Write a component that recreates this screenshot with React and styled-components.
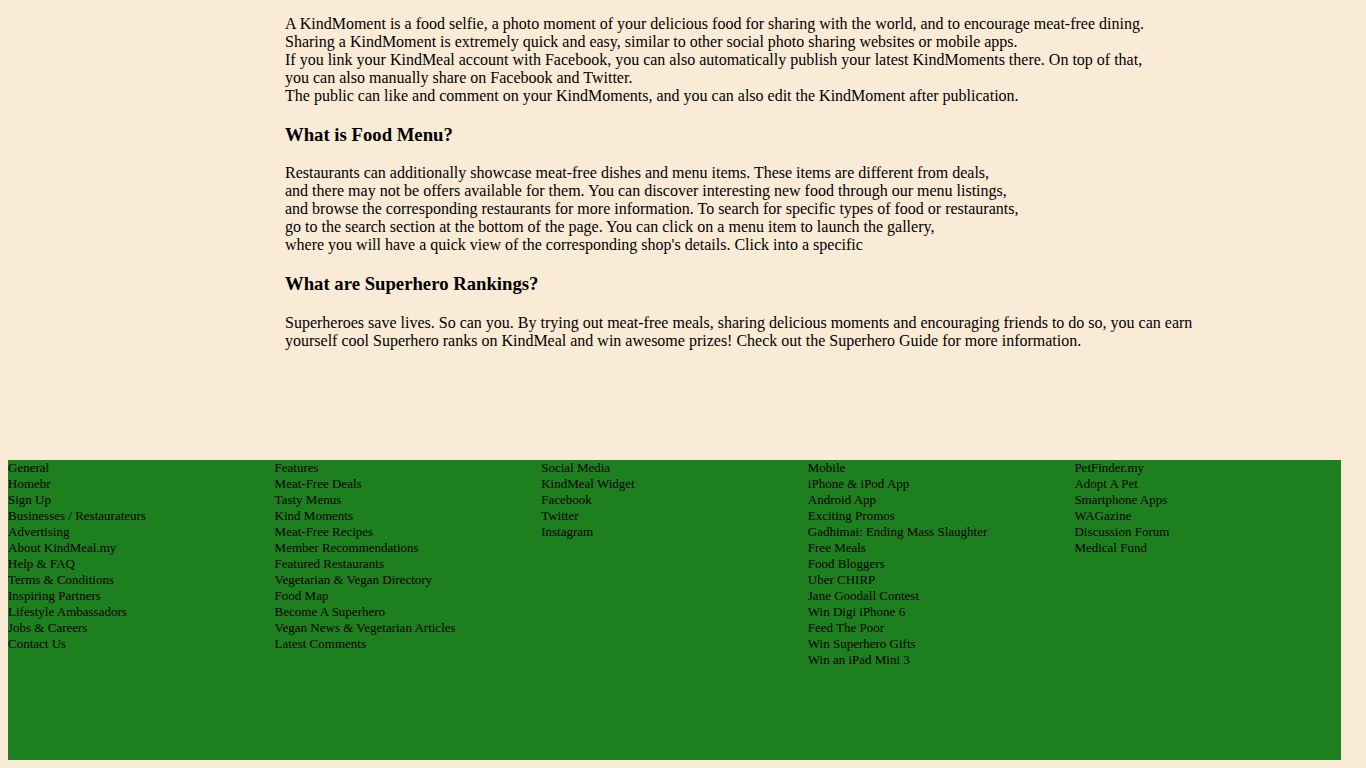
import React from 'react';
import styled, { createGlobalStyle } from 'styled-components';

const GlobalStyle = createGlobalStyle`
  body {
    margin: 8px 25px 8px 8px;
    background: #faebd7;
    font-family: 'Liberation Serif', 'Times New Roman', serif;
    color: #000;
  }
`;

const Main = styled.div`
  margin-left: 277px;
  padding-top: 7px;
  padding-bottom: 94px;
`;

const Para = styled.p`
  font-size: 16px;
  margin: ${p => (p.$first ? '0' : '16px')} 0 16px;
`;

const Heading = styled.h3`
  font-size: 18.72px;
  font-weight: bold;
  margin: 18.72px 0;
`;

const Footer = styled.footer`
  background: #1e7f1e;
  height: 300px;
  display: grid;
  grid-template-columns: repeat(5, 1fr);
  font-size: 13px;
  line-height: 16px;
`;

const Column = styled.ul`
  list-style: none;
  margin: 0;
  padding: 0;
`;

const Item = styled.li`
  margin: 0;
`;

const FooterLink = styled.a`
  color: #000;
  text-decoration: none;
`;

const columns = [
  ['General', 'Homebr', 'Sign Up', 'Businesses / Restaurateurs', 'Advertising', 'About KindMeal.my', 'Help & FAQ', 'Terms & Conditions', 'Inspiring Partners', 'Lifestyle Ambassadors', 'Jobs & Careers', 'Contact Us'],
  ['Features', 'Meat-Free Deals', 'Tasty Menus', 'Kind Moments', 'Meat-Free Recipes', 'Member Recommendations', 'Featured Restaurants', 'Vegetarian & Vegan Directory', 'Food Map', 'Become A Superhero', 'Vegan News & Vegetarian Articles', 'Latest Comments'],
  ['Social Media', 'KindMeal Widget', 'Facebook', 'Twitter', 'Instagram'],
  ['Mobile', 'iPhone & iPod App', 'Android App', 'Exciting Promos', 'Gadhimai: Ending Mass Slaughter', 'Free Meals', 'Food Bloggers', 'Uber CHIRP', 'Jane Goodall Contest', 'Win Digi iPhone 6', 'Feed The Poor', 'Win Superhero Gifts', 'Win an iPad Mini 3'],
  ['PetFinder.my', 'Adopt A Pet', 'Smartphone Apps', 'WAGazine', 'Discussion Forum', 'Medical Fund'],
];

const App = () => {
  return (
    <>
      <GlobalStyle />
      <Main>
        <Para $first>
          A KindMoment is a food selfie, a photo moment of your delicious food for sharing with the world, and to encourage meat-free dining.<br />
          Sharing a KindMoment is extremely quick and easy, similar to other social photo sharing websites or mobile apps.<br />
          If you link your KindMeal account with Facebook, you can also automatically publish your latest KindMoments there. On top of that,<br />
          you can also manually share on Facebook and Twitter.<br />
          The public can like and comment on your KindMoments, and you can also edit the KindMoment after publication.
        </Para>
        <Heading>What is Food Menu?</Heading>
        <Para>
          Restaurants can additionally showcase meat-free dishes and menu items. These items are different from deals,<br />
          and there may not be offers available for them. You can discover interesting new food through our menu listings,<br />
          and browse the corresponding restaurants for more information. To search for specific types of food or restaurants,<br />
          go to the search section at the bottom of the page. You can click on a menu item to launch the gallery,<br />
          where you will have a quick view of the corresponding shop's details. Click into a specific
        </Para>
        <Heading>What are Superhero Rankings?</Heading>
        <Para>
          Superheroes save lives. So can you. By trying out meat-free meals, sharing delicious moments and encouraging friends to do so, you can earn<br />
          yourself cool Superhero ranks on KindMeal and win awesome prizes! Check out the Superhero Guide for more information.
        </Para>
      </Main>
      <Footer>
        {columns.map((col, i) => (
          <Column key={i}>
            {col.map(label => (
              <Item key={label}>
                <FooterLink href="#">{label}</FooterLink>
              </Item>
            ))}
          </Column>
        ))}
      </Footer>
    </>
  );
};

export default App;
